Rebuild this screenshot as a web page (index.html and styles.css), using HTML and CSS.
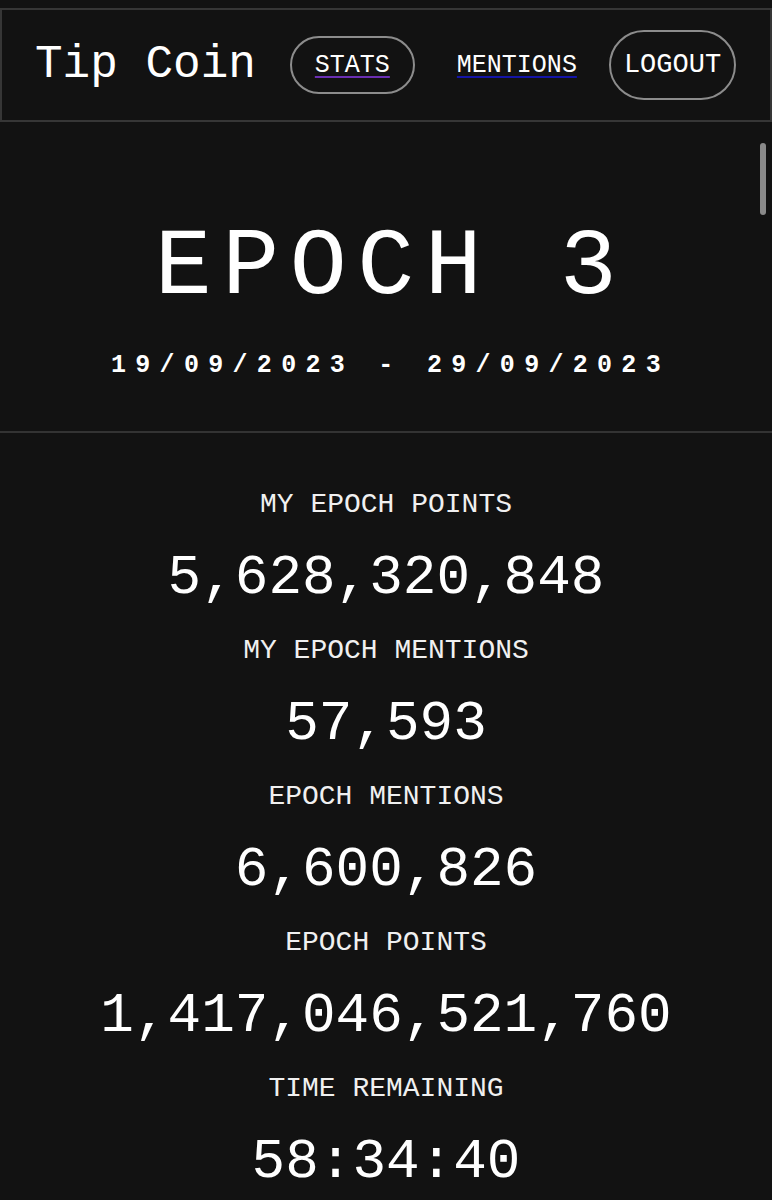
FILE: index.html
```html
<!DOCTYPE html>
<html lang="en">
<head>
<meta charset="utf-8">
<title>Tip Coin</title>
<link rel="stylesheet" href="styles.css">
</head>
<body>
<header class="nav">
  <div class="brand">Tip Coin</div>
  <a class="nav-link pill stats" href="#stats">STATS</a>
  <a class="nav-link mentions" href="#mentions">MENTIONS</a>
  <button class="logout" type="button">LOGOUT</button>
</header>
<main class="content">
  <div class="scroll-thumb"></div>
  <section class="epoch">
    <h1 class="epoch-title">EPOCH 3</h1>
    <p class="epoch-dates">19/09/2023 - 29/09/2023</p>
  </section>
  <section class="stats-list">
    <div class="label">MY EPOCH POINTS</div>
    <div class="value">5,628,320,848</div>
    <div class="label">MY EPOCH MENTIONS</div>
    <div class="value">57,593</div>
    <div class="label">EPOCH MENTIONS</div>
    <div class="value">6,600,826</div>
    <div class="label">EPOCH POINTS</div>
    <div class="value">1,417,046,521,760</div>
    <div class="label">TIME REMAINING</div>
    <div class="value">58:34:40</div>
  </section>
</main>
</body>
</html>
```
FILE: styles.css
```css
* { box-sizing: border-box; }

html, body {
  margin: 0;
  background: #121212;
  color: #ffffff;
  font-family: "Liberation Mono", "DejaVu Sans Mono", monospace;
}

body {
  padding-top: 8px;
  overflow: hidden;
  height: 1200px;
}

.nav {
  height: 114px;
  border: 2px solid #363636;
  display: flex;
  align-items: center;
  padding-left: 33px;
}

.brand {
  font-size: 46px;
  line-height: 1;
  margin-right: 34px;
}

.nav-link {
  color: #ffffff;
  font-size: 25px;
  line-height: 1;
  text-decoration: underline;
  text-decoration-thickness: 2px;
  text-underline-offset: 4px;
}

.pill {
  display: inline-flex;
  align-items: center;
  justify-content: center;
  height: 58px;
  padding: 0 23px;
  border: 2px solid #8c8c8c;
  border-radius: 29px;
}

.stats { text-decoration-color: #6b2fb3; }

.mentions {
  margin-left: 42px;
  text-decoration-color: #1414a8;
}

.logout {
  margin-left: 32px;
  height: 70px;
  padding: 0 13px;
  border: 2px solid #8c8c8c;
  border-radius: 35px;
  background: transparent;
  color: #ffffff;
  font-family: inherit;
  font-size: 27px;
  line-height: 1;
}

.content {
  position: relative;
}

.scroll-thumb {
  position: absolute;
  right: 6px;
  top: 21px;
  width: 6px;
  height: 72px;
  border-radius: 3px;
  background: #8a8a8a;
}

.epoch {
  text-align: center;
  padding: 96px 0 50px;
  border-bottom: 2px solid #333333;
}

.epoch-title {
  margin: 0;
  font-size: 95px;
  font-weight: normal;
  line-height: 100px;
  letter-spacing: 10.5px;
  padding-left: 10px;
}

.epoch-dates {
  margin: 33px 0 0;
  font-size: 25px;
  font-weight: bold;
  line-height: 30px;
  letter-spacing: 9.3px;
  padding-left: 9px;
}

.stats-list {
  display: flex;
  flex-direction: column;
  align-items: center;
  gap: 24px;
  padding-top: 56px;
}

.label {
  font-size: 28px;
  line-height: 32px;
  color: #f0f0f0;
}

.value {
  font-size: 56px;
  line-height: 66px;
}
```
